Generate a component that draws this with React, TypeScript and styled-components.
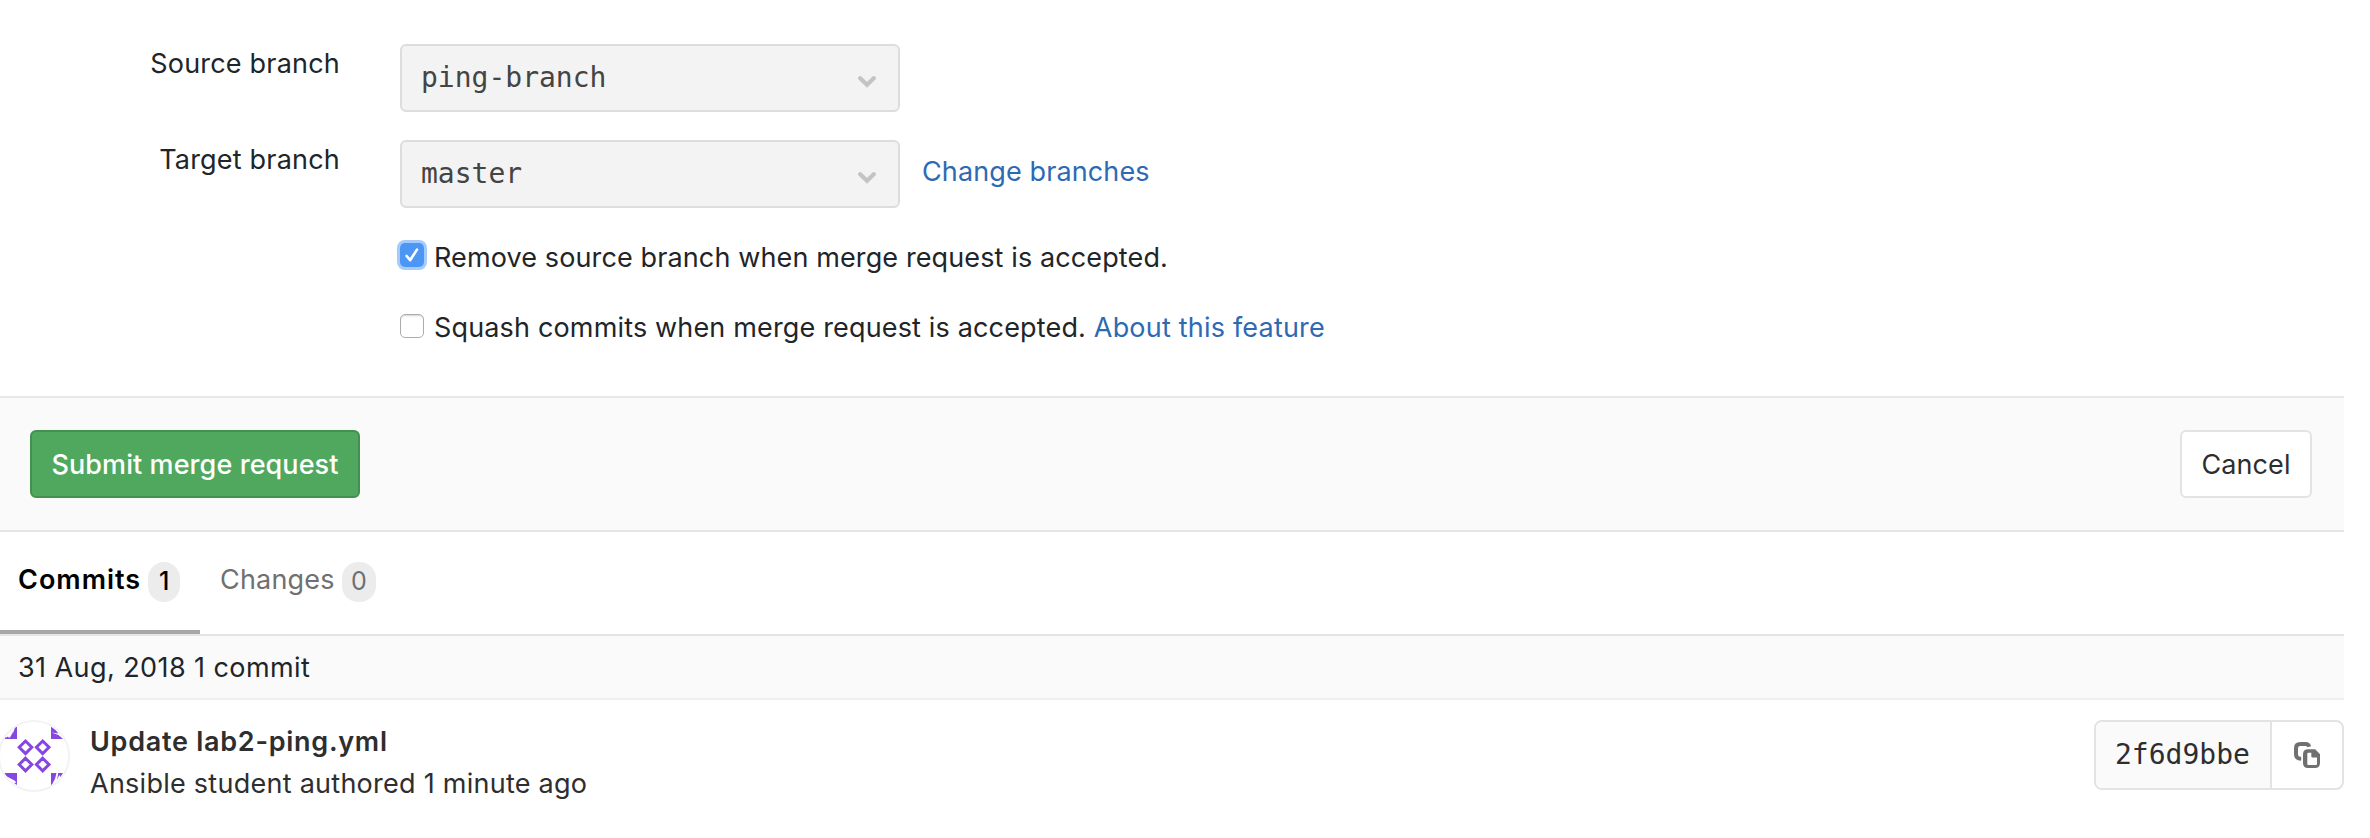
import React from "react";
import styled, { createGlobalStyle } from "styled-components";

const sans = `Inter, "Liberation Sans", sans-serif`;
const mono = `"DejaVu Sans Mono", "Liberation Mono", monospace`;

const GlobalStyle = createGlobalStyle`
  *, *::before, *::after { box-sizing: border-box; }
  body {
    margin: 0;
    background: #fff;
    color: #212529;
    font-family: ${sans};
    font-size: 27px;
    line-height: 40px;
  }
`;

const Page = styled.main`
  width: 2344px;
  height: 838px;
  overflow: hidden;
`;

const Text = styled.span<{ $spacing?: number }>`
  letter-spacing: ${(p) => p.$spacing ?? 0.2}px;
  white-space: nowrap;
`;

const Link = styled.a<{ $spacing?: number }>`
  color: #2e6ab3;
  text-decoration: none;
  letter-spacing: ${(p) => p.$spacing ?? 0.2}px;
  white-space: nowrap;
`;

const BranchForm = styled.section`
  display: flex;
  flex-direction: column;
  height: 396px;
  padding-top: 44px;
`;

const BranchRow = styled.div`
  display: flex;
  align-items: flex-start;
  height: 68px;
  margin-bottom: 28px;
`;

const FieldLabel = styled.label`
  width: 340px;
  margin-right: 60px;
  text-align: right;
`;

const BranchSelect = styled.div`
  display: flex;
  align-items: center;
  justify-content: space-between;
  width: 500px;
  height: 68px;
  padding: 0 22px 0 19px;
  border: 2px solid #dddddd;
  border-radius: 6px;
  background: #f3f3f3;
  color: #444;
  font-family: ${mono};
  font-size: 28px;

  svg {
    margin-top: 8px;
  }
`;

const SideLink = styled.div`
  padding: 12px 0 0 22px;
`;

const OptionList = styled.div`
  display: flex;
  flex-direction: column;
  gap: 30px;
  padding: 2px 0 0 400px;
`;

const Option = styled.div`
  display: flex;
  align-items: flex-start;
  height: 40px;
`;

const Checkbox = styled.span<{ $checked?: boolean }>`
  display: flex;
  align-items: center;
  justify-content: center;
  width: 24px;
  height: 24px;
  margin: ${(p) => (p.$checked ? 5 : 6)}px 10px 0 0;
  border-radius: 5px;
  border: ${(p) => (p.$checked ? "none" : "1px solid #adadad")};
  background: ${(p) => (p.$checked ? "#4c97f6" : "#fff")};
  box-shadow: ${(p) =>
    p.$checked ? "0 0 0 3px #a5cbfa" : "inset 0 2px 2px -1px #d2d2d2"};
`;

const Actions = styled.section`
  display: flex;
  align-items: center;
  justify-content: space-between;
  height: 136px;
  padding: 0 32px 0 30px;
  border-top: 2px solid #e8e8e8;
  border-bottom: 2px solid #e5e5e5;
  background: #fafafa;
`;

const Button = styled.button<{ $primary?: boolean }>`
  height: 68px;
  width: ${(p) => (p.$primary ? 330 : 132)}px;
  padding: 0;
  border: 2px solid ${(p) => (p.$primary ? "#43904f" : "#e3e3e3")};
  border-radius: 6px;
  background: ${(p) => (p.$primary ? "#50a85e" : "#fff")};
  color: ${(p) => (p.$primary ? "#fff" : "#2e2e2e")};
  font-family: ${sans};
  font-size: 27px;
  font-weight: ${(p) => (p.$primary ? 500 : 400)};
`;

const Tabs = styled.nav`
  display: flex;
  height: 104px;
  border-bottom: 2px solid #e5e5e5;
`;

const Tab = styled.div<{ $active?: boolean }>`
  display: flex;
  align-items: flex-start;
  width: 200px;
  height: 102px;
  padding: 28px 0 0 ${(p) => (p.$active ? 18 : 20)}px;
  border-bottom: 4px solid ${(p) => (p.$active ? "#a7a7a7" : "transparent")};
  color: ${(p) => (p.$active ? "#000" : "#707070")};
  font-weight: ${(p) => (p.$active ? 600 : 400)};
`;

const Count = styled.span<{ $active?: boolean }>`
  width: ${(p) => (p.$active ? 32 : 34)}px;
  height: 40px;
  margin: 2px 0 0 7px;
  border-radius: 16px;
  background: #ececec;
  font-size: 25px;
  font-weight: ${(p) => (p.$active ? 500 : 400)};
  line-height: 39px;
  text-align: center;
`;

const DateHeader = styled.header`
  height: 64px;
  padding: 12px 0 0 18px;
  border-bottom: 2px solid #eeeeee;
  background: #fafafa;
`;

const CommitRow = styled.article`
  display: flex;
  align-items: flex-start;
  padding-top: 20px;
`;

const Avatar = styled.svg`
  flex: none;
  margin: 0 20px 0 -2px;
`;

const CommitInfo = styled.div`
  display: flex;
  flex-direction: column;
  flex: 1;
  gap: 2px;
  padding-top: 2px;
  color: #2e2e2e;
`;

const CommitTitle = styled(Text)`
  font-weight: 600;
`;

const ShaGroup = styled.div`
  display: flex;
  width: 250px;
  height: 70px;
  border: 2px solid #e3e3e3;
  border-radius: 8px;
  overflow: hidden;
`;

const Sha = styled.code`
  width: 176px;
  padding-left: 19px;
  border-right: 2px solid #e3e3e3;
  background: #fafafa;
  color: #2e2e2e;
  font-family: ${mono};
  font-size: 28px;
  line-height: 66px;
`;

const CopyButton = styled.div`
  display: flex;
  flex: 1;
  padding: 20px 0 0 22px;
`;

const Chevron = () => (
  <svg width="18" height="12" viewBox="0 0 18 12" fill="none">
    <path
      d="M2.2 2.2 9 8.8l6.8-6.6"
      stroke="#c4c4c4"
      strokeWidth="4.2"
      strokeLinecap="round"
    />
  </svg>
);

const Tick = () => (
  <svg width="16" height="16" viewBox="0 0 16 16" fill="none">
    <path
      d="M2.6 9 6.1 13.2 13 2.6"
      stroke="#fff"
      strokeWidth="2.6"
      strokeLinecap="round"
      strokeLinejoin="round"
    />
  </svg>
);

const CopyIcon = () => (
  <svg width="26" height="26" viewBox="0 0 26 26">
    <path
      d="M15.2 4.8C14.7 2.8 13.5 2 11.5 2H6.2Q2 2 2 6.2v6Q2 16.6 7.2 16.8"
      fill="none"
      stroke="#707070"
      strokeWidth="4"
    />
    <path
      d="M14 7.3h7.2L26 12.2V21q0 5-5 5h-7q-5 0-5-5v-8.700q0-5 5-5ZM14.300 10.800q-1 0-1 1V22q0 1 1 1H22q1 0 1-1v-6.500h-4.500q-1.200 0-1.200-1.200v-3.500Z"
      fill="#707070"
      fillRule="evenodd"
    />
  </svg>
);

const diamonds = [
  [27.5, 27.3],
  [44.7, 27.3],
  [27.5, 44.5],
  [44.7, 44.5],
];

const Identicon = () => (
  <Avatar width="72" height="72" viewBox="0 0 72 72">
    <g fill="#8547e0">
      <path d="M19 6.700V19H9l2.500-2.500v2L15.500 11l-1 4L17 7.500Z" />
      <path d="M7 19v-3l1 1.500 2.200-1V19Z" />
      <path d="M53 7v12h12l-4.500-4-7-2.500 7 1-3-3.500-4-3Z" />
      <path d="M7 53h12v12l-3-2 2.500-.5-2-2L7 55.500Z" />
      <path d="M53 53h5.500l-1.500 6-3 5.500-1 .5ZM60.200 53H65l-2.500 4-1.200-2-2.300 5Z" />
    </g>
    {diamonds.map(([x, y]) => (
      <path
        key={`${x}-${y}`}
        d={`M${x} ${y - 6.3}l6.300 6.300-6.300 6.300-6.300-6.300Z`}
        fill="none"
        stroke="#8547e0"
        strokeWidth="3"
      />
    ))}
    <circle cx="36" cy="36" r="35" fill="none" stroke="#f3f3f3" strokeWidth="2" />
  </Avatar>
);

export default function App() {
  return (
    <>
      <GlobalStyle />
      <Page>
        <BranchForm>
          <BranchRow>
            <FieldLabel>
              <Text>Source branch</Text>
            </FieldLabel>
            <BranchSelect>
              ping-branch
              <Chevron />
            </BranchSelect>
          </BranchRow>
          <BranchRow>
            <FieldLabel>
              <Text>Target branch</Text>
            </FieldLabel>
            <BranchSelect>
              master
              <Chevron />
            </BranchSelect>
            <SideLink>
              <Link $spacing={0.12}>Change branches</Link>
            </SideLink>
          </BranchRow>
          <OptionList>
            <Option>
              <Checkbox $checked>
                <Tick />
              </Checkbox>
              <Text $spacing={0.12}>
                Remove source branch when merge request is accepted.
              </Text>
            </Option>
            <Option>
              <Checkbox />
              <Text $spacing={0.16}>
                Squash commits when merge request is accepted.{" "}
                <Link>About this feature</Link>
              </Text>
            </Option>
          </OptionList>
        </BranchForm>

        <Actions>
          <Button $primary>
            <Text $spacing={0.08}>Submit merge request</Text>
          </Button>
          <Button>
            <Text $spacing={0.1}>Cancel</Text>
          </Button>
        </Actions>

        <Tabs>
          <Tab $active>
            <Text $spacing={1}>Commits</Text>
            <Count $active>1</Count>
          </Tab>
          <Tab>
            <Text>Changes</Text>
            <Count>0</Count>
          </Tab>
        </Tabs>

        <DateHeader>
          <Text $spacing={0.42}>31 Aug, 2018 1 commit</Text>
        </DateHeader>

        <CommitRow>
          <Identicon />
          <CommitInfo>
            <CommitTitle $spacing={0.73}>Update lab2-ping.yml</CommitTitle>
            <Text $spacing={0.26}>Ansible student authored 1 minute ago</Text>
          </CommitInfo>
          <ShaGroup>
            <Sha>2f6d9bbe</Sha>
            <CopyButton>
              <CopyIcon />
            </CopyButton>
          </ShaGroup>
        </CommitRow>
      </Page>
    </>
  );
}
